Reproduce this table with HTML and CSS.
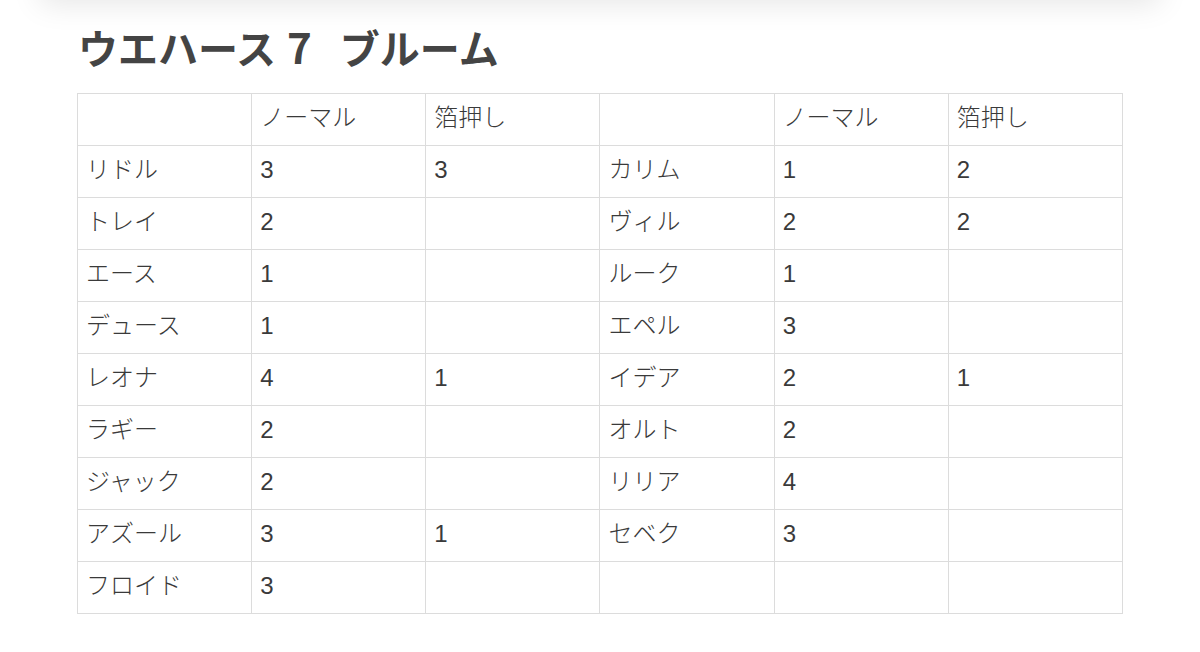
FILE: index.html
```html
<!DOCTYPE html>
<html lang="ja">
<head>
<meta charset="utf-8">
<link rel="stylesheet" href="styles.css">
</head>
<body>
<div class="topshade"></div>
<main class="page">
  <h1 class="title">ウエハース<span class="num">7</span> ブルーム</h1>
  <table class="grid">
    <tr class="head"><td></td><td>ノーマル</td><td>箔押し</td><td></td><td>ノーマル</td><td>箔押し</td></tr>
    <tr><td>リドル</td><td>3</td><td>3</td><td>カリム</td><td>1</td><td>2</td></tr>
    <tr><td>トレイ</td><td>2</td><td></td><td>ヴィル</td><td>2</td><td>2</td></tr>
    <tr><td>エース</td><td>1</td><td></td><td>ルーク</td><td>1</td><td></td></tr>
    <tr><td>デュース</td><td>1</td><td></td><td>エペル</td><td>3</td><td></td></tr>
    <tr><td>レオナ</td><td>4</td><td>1</td><td>イデア</td><td>2</td><td>1</td></tr>
    <tr><td>ラギー</td><td>2</td><td></td><td>オルト</td><td>2</td><td></td></tr>
    <tr><td>ジャック</td><td>2</td><td></td><td>リリア</td><td>4</td><td></td></tr>
    <tr><td>アズール</td><td>3</td><td>1</td><td>セベク</td><td>3</td><td></td></tr>
    <tr><td>フロイド</td><td>3</td><td></td><td></td><td></td><td></td></tr>
  </table>
</main>
</body>
</html>
```
FILE: styles.css
```css
html, body {
  margin: 0;
  padding: 0;
  background: #fff;
  overflow: hidden;
}
body {
  font-family: "Noto Sans CJK JP", "Noto Sans", sans-serif;
  color: #3a3a3a;
}
.topshade {
  position: absolute;
  left: 40px;
  right: 40px;
  top: -40px;
  height: 40px;
  box-shadow: 0 4px 30px rgba(0, 0, 0, 0.10);
  background: #eee;
}
.page {
  padding: 20px 77px 0 77px;
}
.title {
  margin: 0 0 0 1px;
  font-size: 40px;
  line-height: 52px;
  font-weight: 700;
  color: #444;
  word-spacing: 19px;
}
.title .num {
  margin-left: 11px;
  font-size: 42px;
}
.grid {
  margin-top: 20px;
  width: 1046px;
  border-collapse: collapse;
  table-layout: fixed;
}
.grid td {
  border: 1px solid #dcdcdc;
  height: 52px;
  padding: 0 0 3px 8px;
  font-size: 24px;
  font-weight: 300;
  font-family: "Liberation Sans", "Noto Sans CJK JP", sans-serif;
  color: #3a3a3a;
  vertical-align: middle;
  box-sizing: border-box;
}
.grid td:nth-child(1),
.grid td:nth-child(4),
.grid .head td {
  padding-bottom: 8px;
}
```
